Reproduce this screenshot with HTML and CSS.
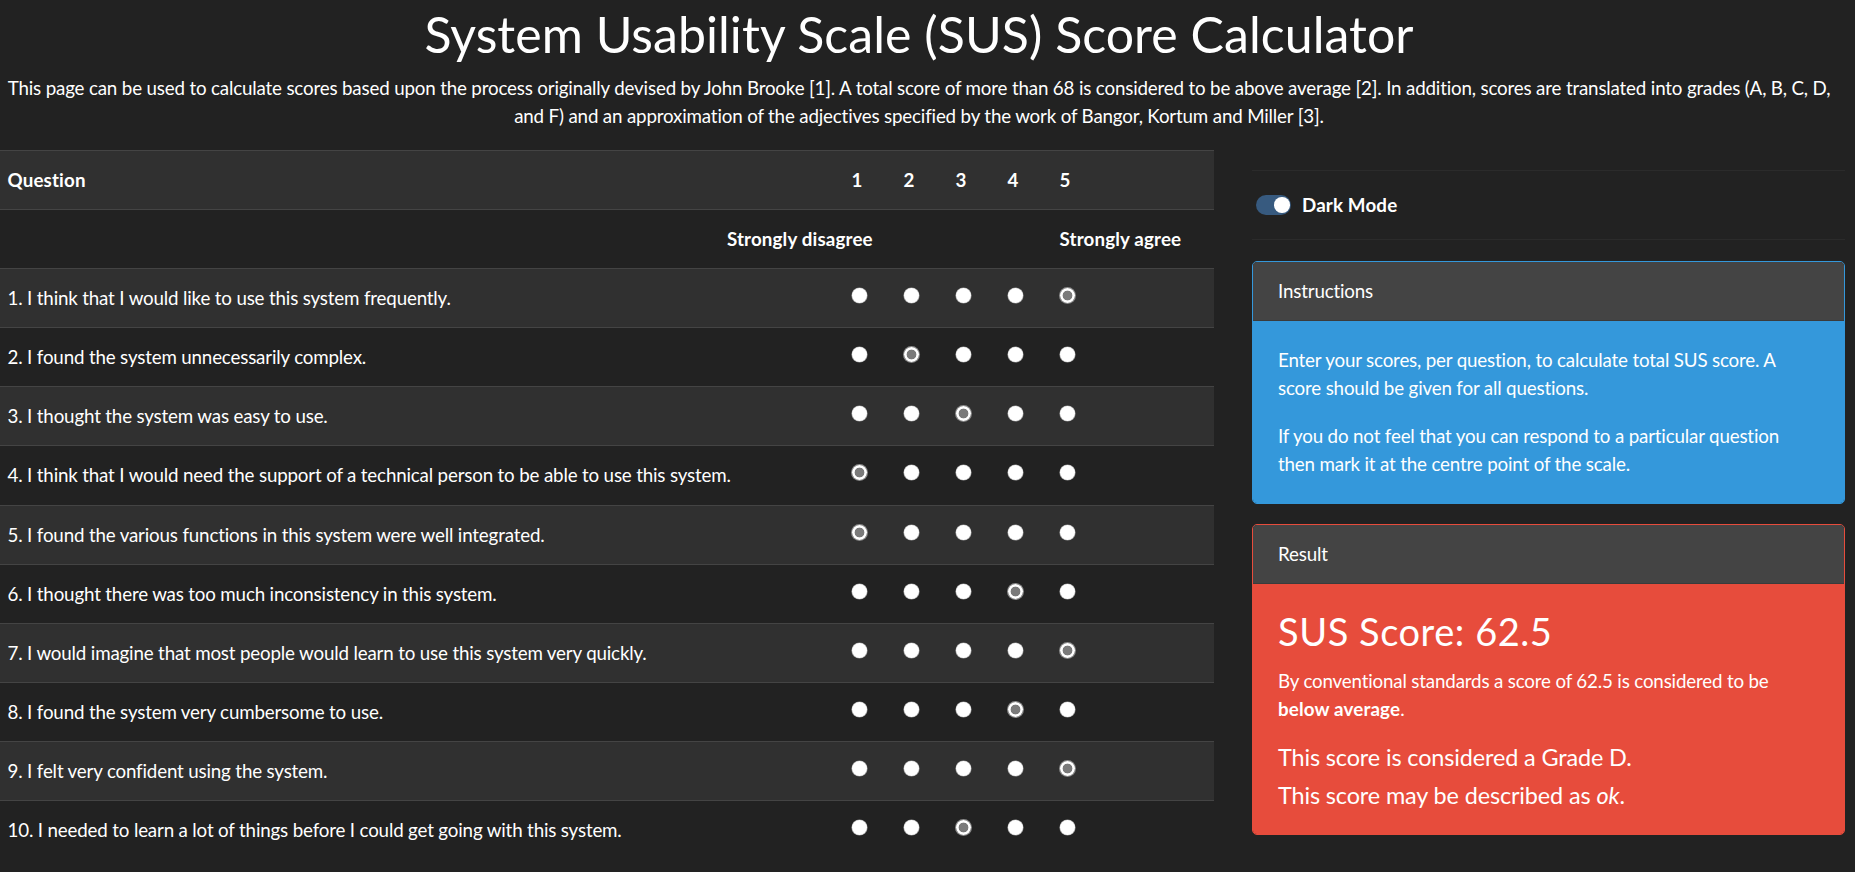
FILE: index.html
```html
<!DOCTYPE html>
<html lang="en">
<head>
<meta charset="utf-8">
<title>System Usability Scale (SUS) Score Calculator</title>
<link rel="stylesheet" href="styles.css">
</head>
<body>
<header class="intro">
  <h1 class="title">System Usability Scale (SUS) Score Calculator</h1>
  <p class="lead">This page can be used to calculate scores based upon the process originally devised by John Brooke [1]. A total score of more than 68 is considered to be above average [2]. In addition, scores are translated into grades (A, B, C, D, and F) and an approximation of the adjectives specified by the work of Bangor, Kortum and Miller [3].</p>
</header>
<main class="layout">
  <section class="survey">
    <table class="sus-table">
      <colgroup>
        <col class="c-q"><col class="c-n"><col class="c-n"><col class="c-n"><col class="c-n"><col class="c-n"><col class="c-end">
      </colgroup>
      <thead>
        <tr class="alt">
          <th class="q">Question</th><th class="n">1</th><th class="n">2</th><th class="n">3</th><th class="n">4</th><th class="n">5</th><th></th>
        </tr>
        <tr>
          <th class="disagree" colspan="2">Strongly disagree</th><th></th><th></th><th></th><th class="n agree" colspan="2">Strongly agree</th>
        </tr>
      </thead>
      <tbody>
        <tr class="alt"><td class="q">1. I think that I would like to use this system frequently.</td><td class="n r"><input type="radio" name="q1"></td><td class="n r"><input type="radio" name="q1"></td><td class="n r"><input type="radio" name="q1"></td><td class="n r"><input type="radio" name="q1"></td><td class="n r"><input type="radio" name="q1" checked></td><td></td></tr>
        <tr><td class="q">2. I found the system unnecessarily complex.</td><td class="n r"><input type="radio" name="q2"></td><td class="n r"><input type="radio" name="q2" checked></td><td class="n r"><input type="radio" name="q2"></td><td class="n r"><input type="radio" name="q2"></td><td class="n r"><input type="radio" name="q2"></td><td></td></tr>
        <tr class="alt"><td class="q">3. I thought the system was easy to use.</td><td class="n r"><input type="radio" name="q3"></td><td class="n r"><input type="radio" name="q3"></td><td class="n r"><input type="radio" name="q3" checked></td><td class="n r"><input type="radio" name="q3"></td><td class="n r"><input type="radio" name="q3"></td><td></td></tr>
        <tr><td class="q">4. I think that I would need the support of a technical person to be able to use this system.</td><td class="n r"><input type="radio" name="q4" checked></td><td class="n r"><input type="radio" name="q4"></td><td class="n r"><input type="radio" name="q4"></td><td class="n r"><input type="radio" name="q4"></td><td class="n r"><input type="radio" name="q4"></td><td></td></tr>
        <tr class="alt"><td class="q">5. I found the various functions in this system were well integrated.</td><td class="n r"><input type="radio" name="q5" checked></td><td class="n r"><input type="radio" name="q5"></td><td class="n r"><input type="radio" name="q5"></td><td class="n r"><input type="radio" name="q5"></td><td class="n r"><input type="radio" name="q5"></td><td></td></tr>
        <tr><td class="q">6. I thought there was too much inconsistency in this system.</td><td class="n r"><input type="radio" name="q6"></td><td class="n r"><input type="radio" name="q6"></td><td class="n r"><input type="radio" name="q6"></td><td class="n r"><input type="radio" name="q6" checked></td><td class="n r"><input type="radio" name="q6"></td><td></td></tr>
        <tr class="alt"><td class="q">7. I would imagine that most people would learn to use this system very quickly.</td><td class="n r"><input type="radio" name="q7"></td><td class="n r"><input type="radio" name="q7"></td><td class="n r"><input type="radio" name="q7"></td><td class="n r"><input type="radio" name="q7"></td><td class="n r"><input type="radio" name="q7" checked></td><td></td></tr>
        <tr><td class="q">8. I found the system very cumbersome to use.</td><td class="n r"><input type="radio" name="q8"></td><td class="n r"><input type="radio" name="q8"></td><td class="n r"><input type="radio" name="q8"></td><td class="n r"><input type="radio" name="q8" checked></td><td class="n r"><input type="radio" name="q8"></td><td></td></tr>
        <tr class="alt"><td class="q">9. I felt very confident using the system.</td><td class="n r"><input type="radio" name="q9"></td><td class="n r"><input type="radio" name="q9"></td><td class="n r"><input type="radio" name="q9"></td><td class="n r"><input type="radio" name="q9"></td><td class="n r"><input type="radio" name="q9" checked></td><td></td></tr>
        <tr><td class="q">10. I needed to learn a lot of things before I could get going with this system.</td><td class="n r"><input type="radio" name="q10"></td><td class="n r"><input type="radio" name="q10"></td><td class="n r"><input type="radio" name="q10" checked></td><td class="n r"><input type="radio" name="q10"></td><td class="n r"><input type="radio" name="q10"></td><td></td></tr>
      </tbody>
    </table>
  </section>
  <aside class="side">
    <div class="mode-row">
      <label class="switch">
        <input class="switch-input" type="checkbox" checked>
        <span class="track"><span class="knob"></span></span>
        <span class="switch-label">Dark Mode</span>
      </label>
    </div>
    <div class="card card-info">
      <div class="card-head">Instructions</div>
      <div class="card-body">
        <p>Enter your scores, per question, to calculate total SUS score. A score should be given for all questions.</p>
        <p>If you do not feel that you can respond to a particular question then mark it at the centre point of the scale.</p>
      </div>
    </div>
    <div class="card card-danger">
      <div class="card-head">Result</div>
      <div class="card-body">
        <h2 class="score">SUS Score: 62.5</h2>
        <p>By conventional standards a score of 62.5 is considered to be <strong>below average</strong>.</p>
        <h5 class="note">This score is considered a Grade D.</h5>
        <h5 class="note">This score may be described as <em>ok</em>.</h5>
      </div>
    </div>
  </aside>
</main>
</body>
</html>
```
FILE: styles.css
```css
html, body {
  margin: 0;
  padding: 0;
  background: #222222;
}
body {
  color: #ffffff;
  font-family: Lato, "Noto Sans", "Liberation Sans", sans-serif;
  font-size: 18.75px;
  line-height: 28.125px;
  letter-spacing: -0.17px;
  overflow: hidden;
}
strong, th, .switch-label {
  letter-spacing: 0.15px;
}

.intro {
  width: 1838px;
  text-align: center;
}
.title {
  margin: 0 0 10px;
  padding-top: 3.6px;
  font-size: 50px;
  font-weight: 400;
  line-height: 1.2;
  letter-spacing: 0.05px;
}
.lead {
  margin: 0 0 20px;
}

.layout {
  display: flex;
  align-items: flex-start;
  width: 1845px;
  gap: 38px;
}
.survey {
  flex: none;
  width: 1214px;
}

.sus-table {
  width: 1214px;
  table-layout: fixed;
  border-collapse: collapse;
}
.c-q { width: 833px; }
.c-n { width: 52px; }
.c-end { width: 121px; }

.sus-table th,
.sus-table td {
  border-top: 1px solid #444444;
  padding: 15px 0;
  line-height: 28.125px;
  text-align: left;
  vertical-align: middle;
  white-space: nowrap;
}
.sus-table th { font-weight: 700; }
.sus-table tr.alt { background: #303030; }
.sus-table .q { padding-left: 7.5px; }
.sus-table .n { padding-left: 18.5px; }
.sus-table .disagree {
  text-align: right;
  padding-right: 12.3px;
}
.sus-table td.r { vertical-align: top; }

.sus-table input[type="radio"] {
  appearance: none;
  -webkit-appearance: none;
  display: block;
  width: 15px;
  height: 15px;
  margin: 4px 0 0;
  border: none;
  border-radius: 50%;
  background: #ffffff;
  box-shadow: 0 0 0 0.6px #9a9a9a;
}
.sus-table input[type="radio"]:checked {
  background: radial-gradient(circle, #7a7a7a 0 4.6px, #ffffff 5.2px);
  box-shadow: 0 0 0 1px #8a8a8a;
}

.side {
  flex: 1;
  padding-top: 20px;
}
.mode-row {
  display: flex;
  align-items: center;
  height: 68px;
  border-top: 1px solid #2b2b2b;
  border-bottom: 1px solid #2b2b2b;
  margin-bottom: 20.7px;
}
.switch {
  display: flex;
  align-items: center;
  margin-left: 4px;
}
.switch-input {
  display: none;
}
.track {
  display: flex;
  align-items: center;
  justify-content: flex-end;
  width: 35px;
  height: 20px;
  box-sizing: border-box;
  padding-right: 1.5px;
  border-radius: 10px;
  background: #375a7f;
}
.knob {
  width: 15.5px;
  height: 15.5px;
  border-radius: 50%;
  background: #ffffff;
}
.switch-label {
  margin-left: 11px;
  font-weight: 700;
}

.card {
  border: 1px solid;
  border-radius: 5px;
  overflow: hidden;
  margin-bottom: 20px;
}
.card-head {
  background: #444444;
  padding: 15px 25px;
  border-bottom: 1px solid rgba(0, 0, 0, 0.125);
}
.card-body {
  padding: 25px;
}
.card-body p {
  margin: 0 0 20px;
}
.card-body > :last-child {
  margin-bottom: 0;
}
.card-info { border-color: #3498db; }
.card-info .card-body { background: #3498db; }
.card-danger { border-color: #e74c3c; }
.card-danger .card-body { background: #e74c3c; }

.score {
  margin: 0 0 12.5px;
  font-size: 38px;
  font-weight: 400;
  line-height: 45px;
  letter-spacing: 0.55px;
}
.note {
  margin: 0 0 10px;
  font-size: 23.44px;
  font-weight: 400;
  line-height: 28.125px;
  letter-spacing: -0.13px;
}
```
